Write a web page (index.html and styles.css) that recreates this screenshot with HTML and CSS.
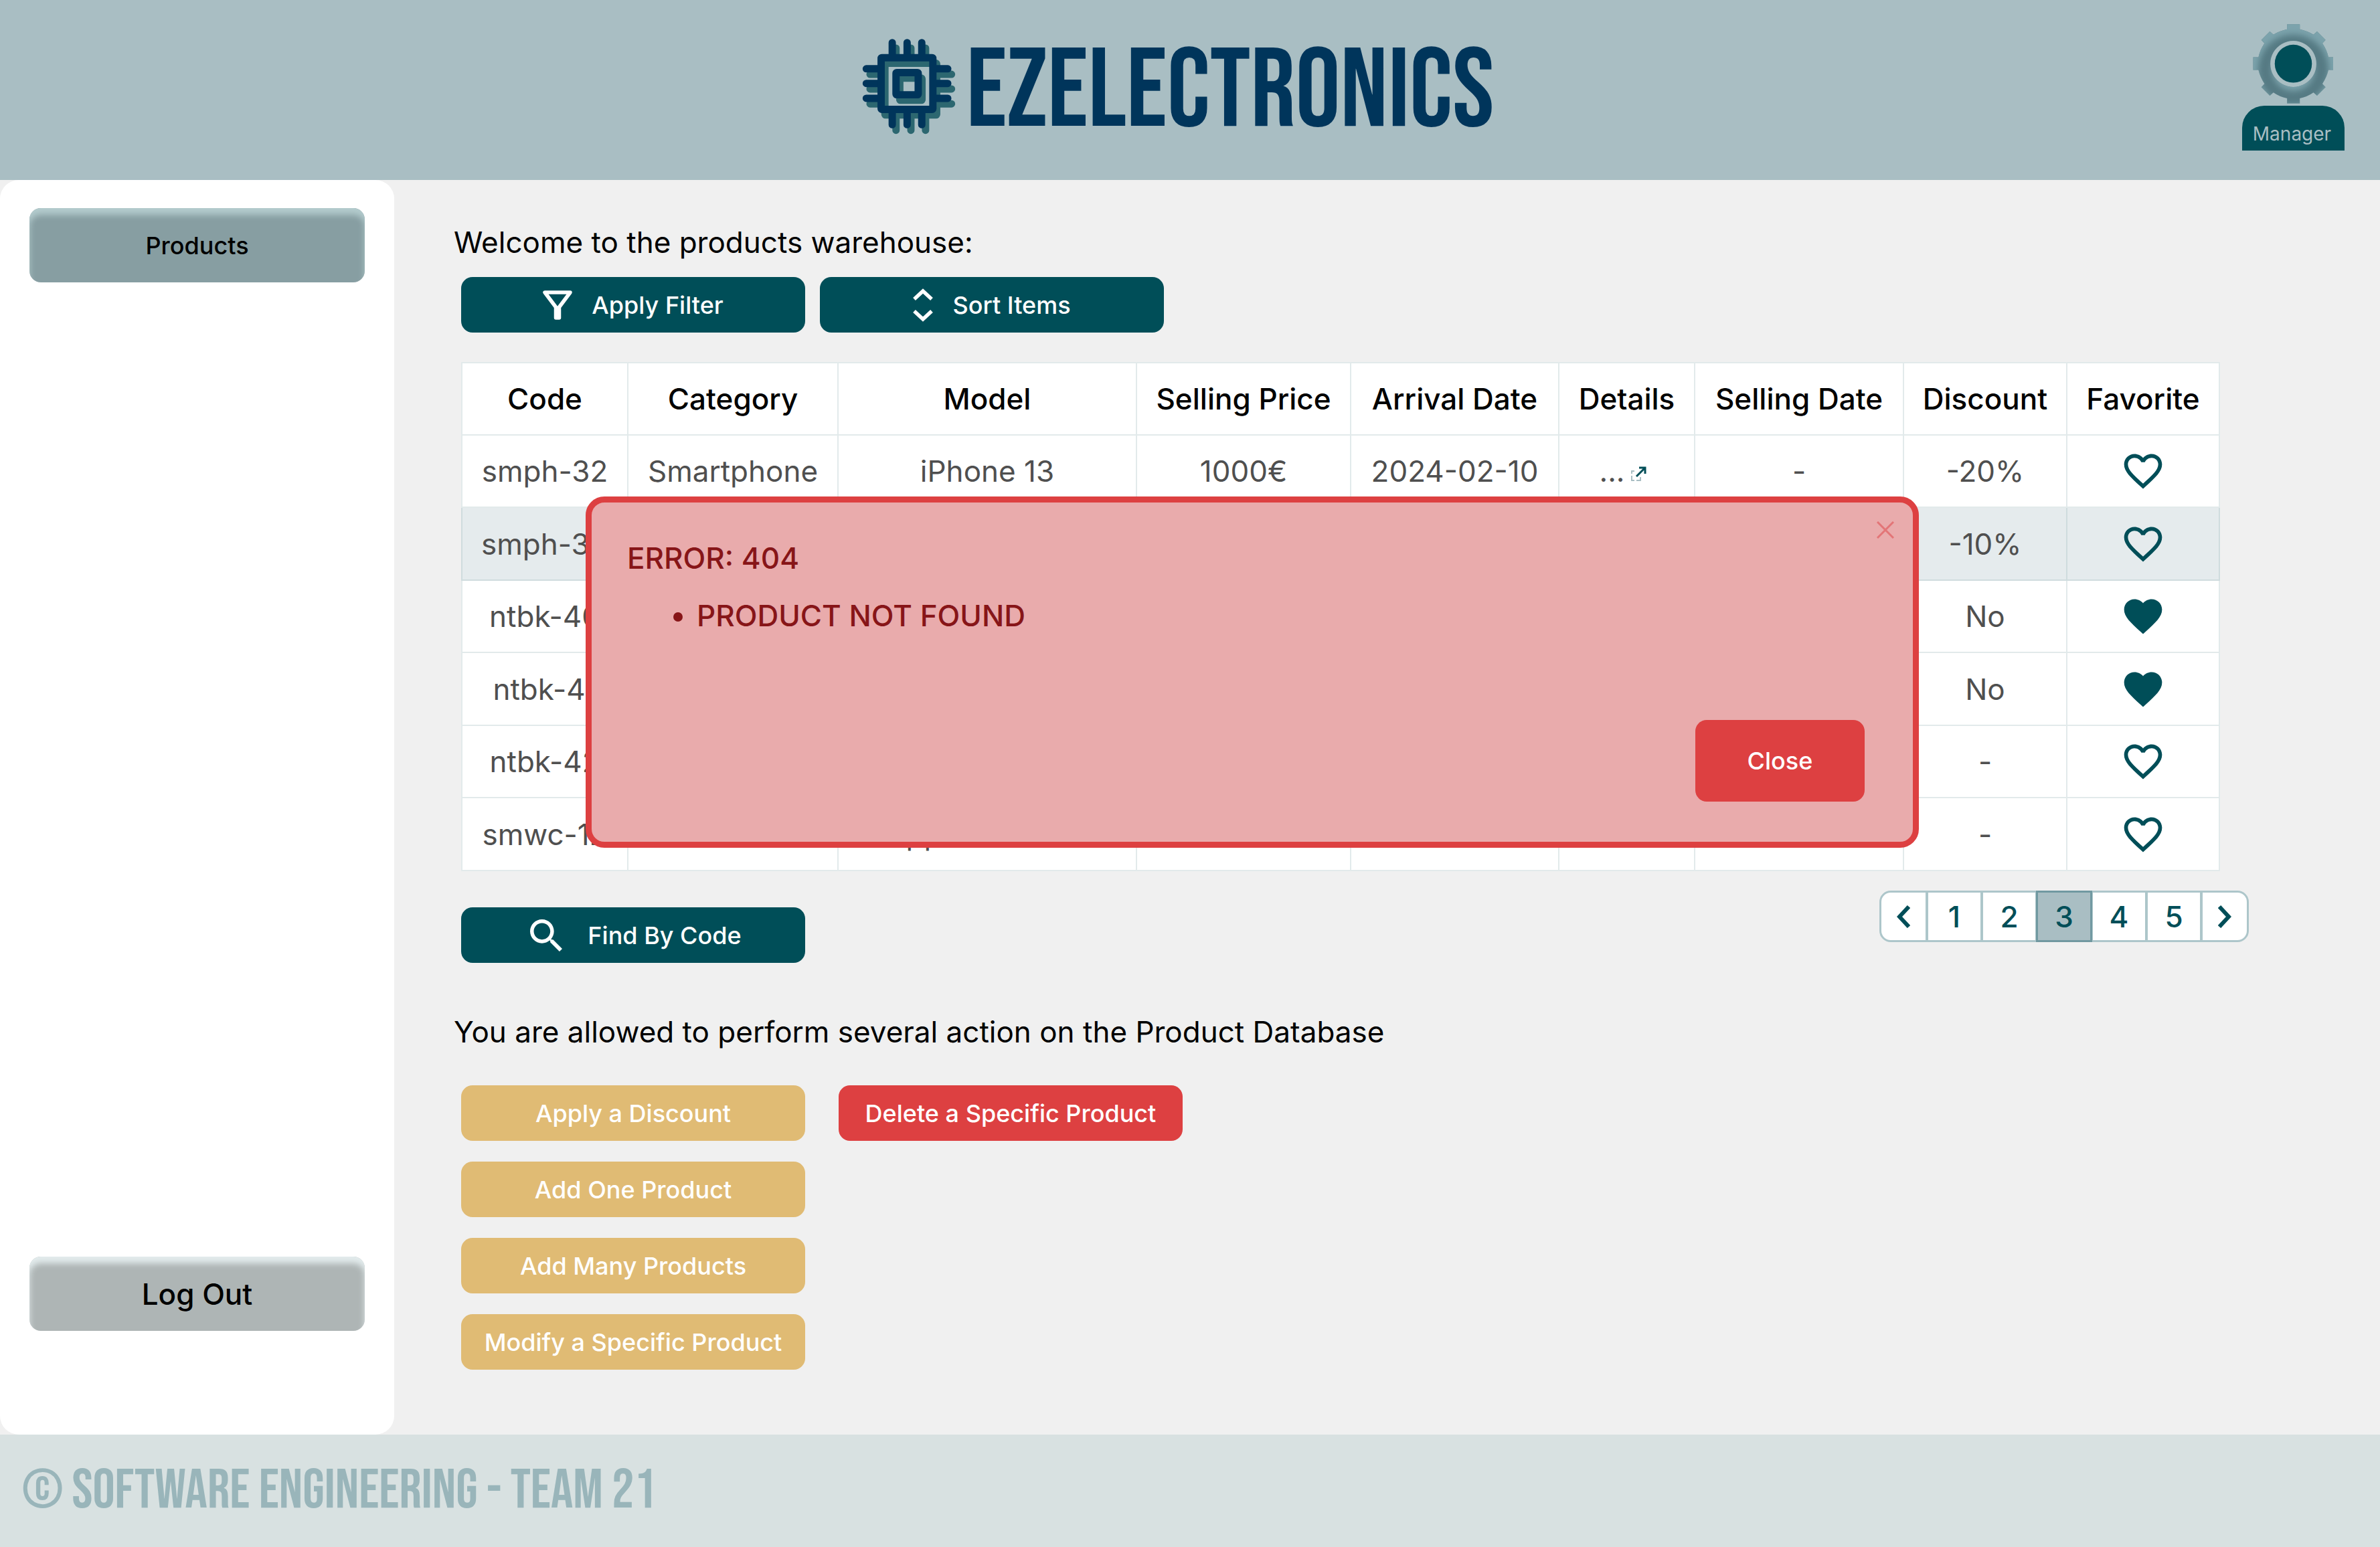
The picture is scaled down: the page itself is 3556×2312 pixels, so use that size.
FILE: index.html
```html
<!DOCTYPE html>
<html lang="en">
<head>
  <meta charset="utf-8">
  <title>EZElectronics - Products</title>
  <meta name="viewport" content="width=device-width, initial-scale=1">
  <link rel="stylesheet" href="styles.css">
</head>
<body>
  <svg class="sprite" width="0" height="0" aria-hidden="true">
    <symbol id="heart" viewBox="0 0 24 24"><path d="M16.5 3c-1.74 0-3.41.81-4.5 2.09C10.91 3.81 9.24 3 7.5 3 4.42 3 2 5.42 2 8.5c0 3.78 3.4 6.86 8.55 11.54L12 21.35l1.45-1.32C18.6 15.36 22 12.28 22 8.5 22 5.42 19.58 3 16.5 3zm-4.4 15.55l-.1.1-.1-.1C7.14 14.24 4 11.39 4 8.5 4 6.5 5.5 5 7.5 5c1.54 0 3.04.99 3.57 2.36h1.87C13.46 5.99 14.96 5 16.5 5c2 0 3.5 1.5 3.5 3.5 0 2.89-3.14 5.74-7.9 10.05z"/></symbol>
    <symbol id="heart-full" viewBox="0 0 24 24"><path d="M12 21.35l-1.45-1.32C5.4 15.36 2 12.28 2 8.5 2 5.42 4.42 3 7.5 3c1.74 0 3.41.81 4.5 2.09C13.09 3.81 14.76 3 16.5 3 19.58 3 22 5.42 22 8.5c0 3.78-3.4 6.86-8.55 11.54L12 21.35z"/></symbol>
    <symbol id="open" viewBox="0 0 24 24"><path d="M6 7H2v4M2 14v7h4M9 21h6v-5" fill="none" stroke="#a9bec3" stroke-width="2"/><path d="M9 15 22 2M13 2h9v9" fill="none" stroke="#004e58" stroke-width="3"/></symbol>
  </svg>

  <header class="header">
    <a class="brand" href="#">
      <svg class="brand-chip" viewBox="24 22 422 430" aria-hidden="true">
        <defs>
          <g id="chip">
            <path d="M160 40v60M227 40v60M293 40v60M160 350v60M227 350v60M293 350v60M43 158h60M43 224h60M43 291h60M350 158h60M350 224h60M350 291h60"/>
            <rect x="110" y="108" width="233" height="233" rx="3"/>
            <rect x="177" y="175" width="100" height="100" rx="3"/>
          </g>
        </defs>
        <use href="#chip" x="17" y="25" class="chip-shadow"/>
        <use href="#chip" class="chip-front"/>
      </svg>
      <span class="brand-name">EZELECTRONICS</span>
    </a>
    <div class="profile">
      <svg class="profile-gear" viewBox="198 44 362 362" aria-hidden="true">
        <defs>
          <clipPath id="gear-clip">
            <path id="gear" clip-rule="evenodd" d="M351 48h57v22q34 7 61 24l16-14 38 38-14 15q20 30 27 62h21v57h-21q-8 33-27 62l14 15-38 38-16-14q-27 19-61 26v23h-57v-23q-34-7-61-26l-16 14-38-38 14-15q-19-29-27-62h-24v-57h24q7-32 27-62l-14-15 38-38 16 14q27-17 61-24zM379 122a103 103 0 1 0 .1 0z"/>
          </clipPath>
          <filter id="soft" x="-20%" y="-20%" width="140%" height="140%"><feGaussianBlur stdDeviation="14"/></filter>
        </defs>
        <g clip-path="url(#gear-clip)">
          <rect x="198" y="44" width="362" height="362" fill="#557a83"/>
          <path filter="url(#soft)" transform="translate(0 26)" fill="#7ba3ac" fill-rule="evenodd" d="M100-40h560v500H100zM379 68a157 157 0 1 0 .1 0zM379 130a95 95 0 1 0 .1 0z"/>
        </g>
        <ellipse cx="379" cy="224" rx="83" ry="85" fill="#004e58"/>
      </svg>
      <span class="profile-role">Manager</span>
    </div>
  </header>

  <div class="page">
    <nav class="sidebar">
      <button class="side-button side-button-active" type="button">Products</button>
      <button class="side-button side-button-logout" type="button">Log Out</button>
    </nav>

    <main class="content">
      <p class="lead">Welcome to the products warehouse:</p>
      <div class="toolbar">
        <button class="button" type="button">
          <svg class="icon-filter" viewBox="0 0 44 44" aria-hidden="true"><path d="M3 3H41L24.500 25V41H19.500V25Z" fill="none" stroke="#fff" stroke-width="5.500" stroke-linejoin="round"/></svg>
          Apply Filter
        </button>
        <button class="button" type="button">
          <svg class="icon-sort" viewBox="0 0 30 50" aria-hidden="true"><path d="M2 16 15 4 28 16M2 34 15 46 28 34" fill="none" stroke="#fff" stroke-width="5.500"/></svg>
          Sort Items
        </button>
      </div>

      <div class="table-area">
        <table class="products">
          <colgroup>
            <col class="col-code"><col class="col-category"><col><col class="col-price"><col class="col-arrival"><col class="col-details"><col class="col-selling"><col class="col-discount"><col class="col-favorite">
          </colgroup>
          <thead>
            <tr><th>Code</th><th>Category</th><th>Model</th><th>Selling Price</th><th>Arrival Date</th><th>Details</th><th>Selling Date</th><th>Discount</th><th>Favorite</th></tr>
          </thead>
          <tbody>
            <tr><td>smph-32</td><td>Smartphone</td><td>iPhone 13</td><td>1000€</td><td>2024-02-10</td><td><a class="details" href="#" aria-label="Open details">...<svg class="icon-open"><use href="#open"/></svg></a></td><td>-</td><td>-20%</td><td><button class="favorite" type="button" aria-label="Add to favorites"><svg><use href="#heart"/></svg></button></td></tr>
            <tr class="selected"><td>smph-34</td><td></td><td></td><td></td><td></td><td></td><td></td><td>-10%</td><td><button class="favorite" type="button" aria-label="Add to favorites"><svg><use href="#heart"/></svg></button></td></tr>
            <tr><td>ntbk-40</td><td></td><td></td><td></td><td></td><td></td><td></td><td>No</td><td><button class="favorite" type="button" aria-label="Remove from favorites"><svg><use href="#heart-full"/></svg></button></td></tr>
            <tr><td>ntbk-41</td><td></td><td></td><td></td><td></td><td></td><td></td><td>No</td><td><button class="favorite" type="button" aria-label="Remove from favorites"><svg><use href="#heart-full"/></svg></button></td></tr>
            <tr><td>ntbk-42</td><td></td><td></td><td></td><td></td><td></td><td></td><td>-</td><td><button class="favorite" type="button" aria-label="Add to favorites"><svg><use href="#heart"/></svg></button></td></tr>
            <tr><td>smwc-12</td><td></td><td>Apple Watch 9</td><td></td><td></td><td></td><td></td><td>-</td><td><button class="favorite" type="button" aria-label="Add to favorites"><svg><use href="#heart"/></svg></button></td></tr>
          </tbody>
        </table>

        <div class="alert" role="alertdialog" aria-labelledby="alert-title">
          <button class="alert-dismiss" type="button" aria-label="Dismiss"><svg viewBox="0 0 26 26"><path d="M1 1 25 25M25 1 1 25" fill="none" stroke="#e37577" stroke-width="3"/></svg></button>
          <h2 class="alert-title" id="alert-title">ERROR: 404</h2>
          <ul class="alert-list"><li>PRODUCT NOT FOUND</li></ul>
          <button class="alert-close" type="button">Close</button>
        </div>
      </div>

      <div class="below-table">
        <button class="button button-find" type="button">
          <svg class="icon-search" viewBox="3 3 17.490 17.490" aria-hidden="true"><path fill="#fff" d="M15.500 14h-.79l-.28-.27C15.410 12.590 16 11.110 16 9.500 16 5.910 13.090 3 9.500 3S3 5.910 3 9.500 5.910 16 9.500 16c1.610 0 3.090-.59 4.230-1.570l.27.28v.79l5 4.990L20.490 19l-4.990-5zm-6 0C7.010 14 5 11.990 5 9.500S7.010 5 9.500 5 14 7.010 14 9.500 11.990 14 9.500 14z"/></svg>
          Find By Code
        </button>
        <nav class="pagination" aria-label="Pages">
          <button class="page-arrow" type="button" aria-label="Previous page"><svg viewBox="0 0 20 34"><path d="M18 2 4 17 18 32" fill="none" stroke="#004e58" stroke-width="6"/></svg></button>
          <button class="page-number" type="button">1</button>
          <button class="page-number" type="button">2</button>
          <button class="page-number page-current" type="button" aria-current="page">3</button>
          <button class="page-number" type="button">4</button>
          <button class="page-number" type="button">5</button>
          <button class="page-arrow" type="button" aria-label="Next page"><svg viewBox="0 0 20 34"><path d="M2 2 16 17 2 32" fill="none" stroke="#004e58" stroke-width="6"/></svg></button>
        </nav>
      </div>

      <p class="lead">You are allowed to perform several action on the Product Database</p>
      <div class="actions">
        <div class="action-column">
          <button class="button button-edit" type="button">Apply a Discount</button>
          <button class="button button-edit" type="button">Add One Product</button>
          <button class="button button-edit" type="button">Add Many Products</button>
          <button class="button button-edit" type="button">Modify a Specific Product</button>
        </div>
        <div class="action-column">
          <button class="button button-delete" type="button">Delete a Specific Product</button>
        </div>
      </div>
    </main>
  </div>

  <footer class="footer">© SOFTWARE ENGINEERING - TEAM 21</footer>
</body>
</html>
```
FILE: styles.css
```css
* {
  box-sizing: border-box;
}

body {
  margin: 0;
  min-height: 100vh;
  display: flex;
  flex-direction: column;
  background: #f0f0f0;
  color: #000;
  font-family: Inter, "Liberation Sans", sans-serif;
  font-size: 44px;
  line-height: 56px;
}

button {
  margin: 0;
  padding: 0;
  border: 0;
  background: none;
  color: inherit;
  font: inherit;
  cursor: pointer;
}

svg {
  display: block;
}

.sprite {
  position: absolute;
}

/* Header */

.header {
  display: grid;
  grid-template-columns: 1fr auto 1fr;
  align-items: start;
  height: 269px;
  padding: 0 53px 0 17px;
  background: #a9bec3;
}

.brand {
  grid-column: 2;
  display: flex;
  align-items: flex-start;
  gap: 16px;
  padding-top: 57px;
  color: #00355b;
  text-decoration: none;
}

.brand-chip {
  width: 140px;
  height: 144px;
}

.brand-name,
.footer {
  font-family: "Bebas Neue", "Oswald", "Roboto Condensed", "Liberation Sans Narrow", "Liberation Sans", sans-serif;
  font-weight: 400;
}

.brand-name {
  font-size: 167px;
  line-height: 162px;
}

.chip-front,
.chip-shadow {
  fill: none;
  stroke-width: 33px;
  stroke-linecap: round;
  stroke-linejoin: round;
}

.chip-front {
  stroke: #00355b;
}

.chip-shadow {
  stroke: #2c6770;
}

.profile {
  justify-self: end;
  display: flex;
  flex-direction: column;
  align-items: center;
  gap: 2px;
  padding-top: 35px;
}

.profile-gear {
  width: 121px;
  height: 121px;
}

.profile-role {
  width: 153px;
  padding: 24px 4px 7px 0;
  border-radius: 33px 33px 0 0;
  background: #004e58;
  color: #a9bec3;
  font-size: 28px;
  line-height: 36px;
  text-align: center;
}

/* Page body */

.page {
  flex: 1;
  display: flex;
}

.sidebar {
  flex: none;
  width: 589px;
  display: flex;
  flex-direction: column;
  justify-content: space-between;
  padding: 42px 44px 155px;
  border-radius: 28px;
  background: #fff;
}

.side-button {
  height: 111px;
  border-radius: 17px;
  font-weight: 500;
}

.side-button-active {
  background: #879ea2;
  box-shadow: inset 0 10px 10px #b3cbcd;
  font-size: 36px;
}

.side-button-logout {
  background: #aeb5b5;
  box-shadow: inset 0 10px 10px #e3eced;
}

.content {
  flex: 1;
  min-width: 0;
  padding: 65px 196px 96px 89px;
}

.lead {
  margin: 0;
}

.button {
  display: flex;
  align-items: center;
  justify-content: center;
  width: 514px;
  height: 83px;
  gap: 29px;
  border-radius: 17px;
  background: #004e58;
  color: #fff;
  font-size: 36px;
  font-weight: 500;
}

.icon-filter {
  width: 44px;
  height: 44px;
}

.icon-sort {
  width: 30px;
  height: 50px;
}

.icon-search {
  width: 48px;
  height: 48px;
}

.toolbar {
  display: flex;
  gap: 22px;
  margin: 24px 0 44px 11px;
}

/* Products table */

.table-area {
  position: relative;
  margin: 0 43px 0 11px;
}

.products {
  width: 100%;
  table-layout: fixed;
  border-collapse: collapse;
  background: #fff;
}

.products tr {
  height: 108px;
}

.products tbody tr:nth-child(even) {
  height: 109px;
}

.products th,
.products td {
  padding: 0;
  border: 2px solid #e2eaeb;
  text-align: center;
  white-space: nowrap;
}

.products th {
  font-weight: 500;
}

.products td {
  color: #4f4f4f;
}

.products .selected td {
  border-color: #cfdcde;
  background: #e5ebed;
}

.col-code { width: 248px; }
.col-category { width: 314px; }
.col-price { width: 320px; }
.col-arrival { width: 311px; }
.col-details { width: 203px; }
.col-selling { width: 312px; }
.col-discount { width: 244px; }
.col-favorite { width: 228px; }

.details {
  display: flex;
  align-items: center;
  justify-content: center;
  gap: 8px;
  padding-right: 12px;
  color: inherit;
  text-decoration: none;
}

.icon-open {
  width: 24px;
  height: 24px;
  margin-top: 10px;
}

.favorite {
  display: inline-block;
  vertical-align: middle;
}

.favorite svg {
  width: 68px;
  height: 68px;
  fill: #004e58;
}

/* Error dialog laid over the table */

.alert {
  position: absolute;
  top: 201px;
  left: 186px;
  right: 450px;
  display: flex;
  flex-direction: column;
  height: 525px;
  padding: 55px 72px 60px 53px;
  border: 9px solid #dd4041;
  border-radius: 28px;
  background: #e9abac;
  color: #871518;
  font-weight: 500;
}

.alert-title {
  margin: 0;
  font: inherit;
}

.alert-list {
  margin: 30px 0 0;
  padding: 0 0 0 104px;
}

.alert-close {
  align-self: flex-end;
  width: 253px;
  height: 122px;
  margin-top: auto;
  border-radius: 17px;
  background: #dd4041;
  color: #fff;
  font-size: 36px;
}

.alert-dismiss {
  position: absolute;
  top: 28px;
  right: 28px;
}

.alert-dismiss svg {
  width: 26px;
  height: 26px;
}

/* Search and pages */

.below-table {
  display: flex;
  align-items: flex-start;
  justify-content: space-between;
  margin: 29px 0 75px 11px;
}

.button-find {
  gap: 38px;
  margin-top: 25px;
  padding-left: 8px;
}

.pagination {
  display: flex;
}

.pagination button {
  display: flex;
  align-items: center;
  justify-content: center;
  width: 84px;
  height: 77px;
  margin-left: -2px;
  border: 3px solid #adc6ca;
  background: #fff;
  color: #004e58;
  font-weight: 500;
}

.pagination .page-arrow {
  width: 72px;
}

.page-arrow:first-child {
  border-radius: 17px 0 0 17px;
}

.page-arrow:last-child {
  border-radius: 0 17px 17px 0;
}

.page-arrow svg {
  width: 20px;
  height: 34px;
}

.pagination .page-current {
  z-index: 1;
  border-color: #7199a1;
  background: #a9bec3;
}

/* Actions */

.actions {
  display: flex;
  align-items: flex-start;
  gap: 50px;
  margin: 52px 0 0 11px;
}

.action-column {
  display: flex;
  flex-direction: column;
  gap: 31px;
}

.button-edit {
  background: #e0bb74;
}

.button-delete {
  background: #dd4041;
}

/* Footer */

.footer {
  padding: 44px 33px;
  background: #d8e1e1;
  color: #99b5ba;
  font-size: 83px;
  line-height: 80px;
}
```
